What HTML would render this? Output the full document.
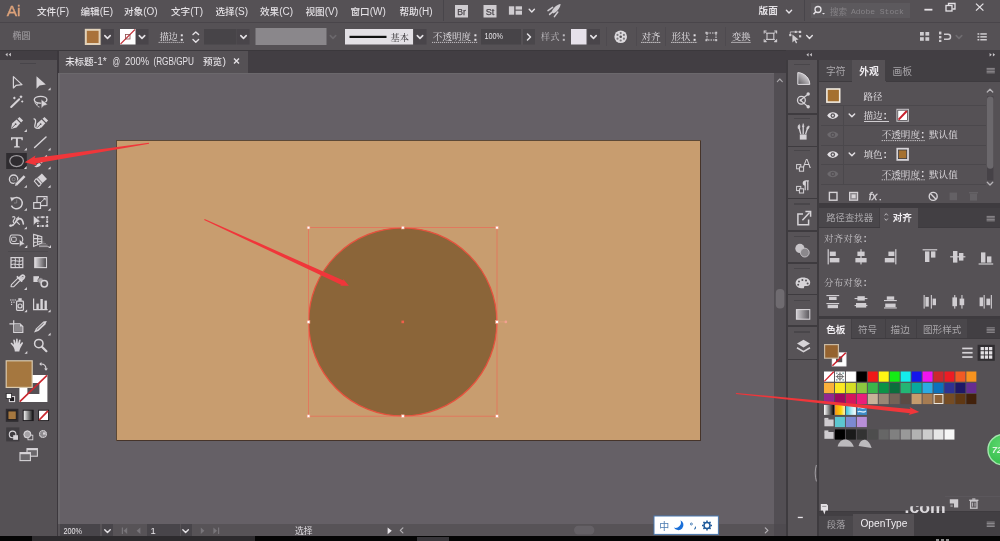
<!DOCTYPE html>
<html lang="zh"><head><meta charset="utf-8"><title>Adobe Illustrator</title>
<style>
html,body{margin:0;padding:0;background:#555155;}
body{width:1000px;height:541px;overflow:hidden;position:relative;font-family:"Liberation Sans",sans-serif;}
#app{position:absolute;left:0;top:0;width:1000px;height:541px;overflow:hidden;background:#555155;}
#app>div{position:absolute;}
#ov{position:absolute;left:0;top:0;will-change:transform;}
svg{font-family:"Liberation Sans",sans-serif;}
</style></head><body>
<div id="app">
<div style="left:0px;top:0px;width:1000px;height:22px;background:#555155;"></div>
<div style="left:0px;top:22px;width:1000px;height:1px;background:#49454a;"></div>
<div style="left:443px;top:0px;width:1px;height:21px;background:#48454a;"></div>
<div style="left:804px;top:0px;width:1px;height:21px;background:#48454a;"></div>
<div style="left:0px;top:23px;width:1000px;height:27px;background:#555155;"></div>
<div style="left:606px;top:27px;width:1px;height:19px;background:#4e4a4f;"></div>
<div style="left:635.5px;top:27px;width:1px;height:19px;background:#4e4a4f;"></div>
<div style="left:665px;top:27px;width:1px;height:19px;background:#4e4a4f;"></div>
<div style="left:725px;top:27px;width:1px;height:19px;background:#4e4a4f;"></div>
<div style="left:0px;top:50px;width:1000px;height:23px;background:#423e43;"></div>
<div style="left:0px;top:50px;width:1000px;height:1px;background:#3b383c;"></div>
<div style="left:0px;top:51px;width:57px;height:8.6px;background:#423e43;"></div>
<div style="left:58.6px;top:51px;width:189.9px;height:21.5px;background:#555155;"></div>
<div style="left:0px;top:59.5px;width:57px;height:477px;background:#555155;"></div>
<div style="left:56.8px;top:51px;width:1.8px;height:485px;background:#3c383d;"></div>
<div style="left:20px;top:63px;width:16px;height:1px;background:#48454a;"></div>
<div style="left:8px;top:250.5px;width:40px;height:1px;background:#4c494d;"></div>
<div style="left:58px;top:72.5px;width:716px;height:452px;background:#6b686c;"></div>
<div style="left:59.5px;top:74px;width:714px;height:450.5px;background:#656066;"></div>
<div style="left:116.3px;top:139.6px;width:584.8px;height:301.4px;background:#46342a;"></div>
<div style="left:116.3px;top:139.6px;width:584.8px;height:1.2px;background:#5c4937;"></div>
<div style="left:116.3px;top:139.6px;width:1.2px;height:301.4px;background:#5c4937;"></div>
<div style="left:117.4px;top:140.7px;width:582.6px;height:299.3px;background:#c89d6f;"></div>
<div style="left:774px;top:72.5px;width:13.5px;height:452px;background:#524e53;"></div>
<div style="left:785.5px;top:50px;width:214.5px;height:9.6px;background:#423e43;"></div>
<div style="left:785.5px;top:59.5px;width:33.5px;height:477px;background:#3e3b3f;"></div>
<div style="left:787.8px;top:59.5px;width:29.4px;height:477px;background:#575357;"></div>
<div style="left:794px;top:63.6px;width:16px;height:1.4px;background:#49464a;"></div>
<div style="left:787.8px;top:113.4px;width:29.4px;height:1.5px;background:#3e3b3f;"></div>
<div style="left:794px;top:117.6px;width:16px;height:1.4px;background:#49464a;"></div>
<div style="left:787.8px;top:145.6px;width:29.4px;height:1.5px;background:#3e3b3f;"></div>
<div style="left:794px;top:150px;width:16px;height:1.4px;background:#49464a;"></div>
<div style="left:787.8px;top:197.8px;width:29.4px;height:1.5px;background:#3e3b3f;"></div>
<div style="left:794px;top:203.4px;width:16px;height:1.4px;background:#49464a;"></div>
<div style="left:787.8px;top:230.4px;width:29.4px;height:1.5px;background:#3e3b3f;"></div>
<div style="left:794px;top:236px;width:16px;height:1.4px;background:#49464a;"></div>
<div style="left:787.8px;top:262.2px;width:29.4px;height:1.5px;background:#3e3b3f;"></div>
<div style="left:794px;top:267.6px;width:16px;height:1.4px;background:#49464a;"></div>
<div style="left:787.8px;top:293.8px;width:29.4px;height:1.5px;background:#3e3b3f;"></div>
<div style="left:794px;top:299.8px;width:16px;height:1.4px;background:#49464a;"></div>
<div style="left:787.8px;top:325.4px;width:29.4px;height:1.5px;background:#3e3b3f;"></div>
<div style="left:794px;top:331.2px;width:16px;height:1.4px;background:#49464a;"></div>
<div style="left:787.8px;top:358.6px;width:29.4px;height:1.5px;background:#3e3b3f;"></div>
<div style="left:818.8px;top:59.5px;width:181.20000000000005px;height:21.5px;background:#423f43;"></div>
<div style="left:818.8px;top:81px;width:181.20000000000005px;height:122px;background:#555155;"></div>
<div style="left:818.8px;top:59.5px;width:181.20000000000005px;height:21px;background:#423f43;"></div>
<div style="left:818.8px;top:59.5px;width:33.10000000000002px;height:21px;background:#4a474b;"></div>
<div style="left:851.9px;top:59.5px;width:33.60000000000002px;height:22.5px;background:#555155;"></div>
<div style="left:818.8px;top:80.5px;width:33.1px;height:1.5px;background:#3e3b3f;"></div>
<div style="left:885.5px;top:80.5px;width:114.5px;height:1.5px;background:#3e3b3f;"></div>
<div style="left:820.8px;top:105.3px;width:165px;height:1px;background:#4b484c;"></div>
<div style="left:820.8px;top:125px;width:165px;height:1px;background:#4b484c;"></div>
<div style="left:820.8px;top:144.6px;width:165px;height:1px;background:#4b484c;"></div>
<div style="left:820.8px;top:163.9px;width:165px;height:1px;background:#4b484c;"></div>
<div style="left:820.8px;top:184.2px;width:165px;height:1px;background:#4b484c;"></div>
<div style="left:843.3px;top:105.5px;width:1px;height:79px;background:#4b484c;"></div>
<div style="left:863.5px;top:120.6px;width:25px;height:1px;background:#d0cdd1;"></div>
<div style="left:818.8px;top:203px;width:181.20000000000005px;height:4.5px;background:#3e3b3f;"></div>
<div style="left:818.8px;top:207.5px;width:181.20000000000005px;height:20px;background:#423f43;"></div>
<div style="left:818.8px;top:227.5px;width:181.20000000000005px;height:89px;background:#555155;"></div>
<div style="left:818.8px;top:207.5px;width:181.20000000000005px;height:19.5px;background:#423f43;"></div>
<div style="left:818.8px;top:207.5px;width:60.40000000000009px;height:19.5px;background:#4a474b;"></div>
<div style="left:880.2px;top:207.5px;width:37.59999999999991px;height:21.0px;background:#555155;"></div>
<div style="left:818.8px;top:227px;width:61.4px;height:1.3px;background:#3e3b3f;"></div>
<div style="left:917.8px;top:227px;width:82.20000000000005px;height:1.3px;background:#3e3b3f;"></div>
<div style="left:818.8px;top:316.4px;width:181.20000000000005px;height:2.6px;background:#3e3b3f;"></div>
<div style="left:818.8px;top:319px;width:181.20000000000005px;height:19.5px;background:#423f43;"></div>
<div style="left:818.8px;top:338.5px;width:181.20000000000005px;height:176px;background:#555155;"></div>
<div style="left:818.8px;top:319px;width:181.20000000000005px;height:19.5px;background:#423f43;"></div>
<div style="left:818.8px;top:319px;width:32.60000000000002px;height:21.0px;background:#555155;"></div>
<div style="left:852.4px;top:319px;width:32.200000000000045px;height:19.5px;background:#4a474b;"></div>
<div style="left:885.6px;top:319px;width:30.799999999999955px;height:19.5px;background:#4a474b;"></div>
<div style="left:917.4px;top:319px;width:49.60000000000002px;height:19.5px;background:#4a474b;"></div>
<div style="left:851.4px;top:338.2px;width:148.60000000000002px;height:1.3px;background:#3e3b3f;"></div>
<div style="left:945px;top:495.6px;width:55px;height:1px;background:#5b575c;"></div>
<div style="left:818.8px;top:511px;width:181.20000000000005px;height:25px;background:#423f43;"></div>
<div style="left:818.8px;top:511px;width:181.20000000000005px;height:1.4px;background:#3e3b3f;"></div>
<div style="left:818.8px;top:515.6px;width:34px;height:20.2px;background:#4a474b;"></div>
<div style="left:852.8px;top:513.6px;width:60.8px;height:22.2px;background:#555155;"></div>
<div style="left:58px;top:524px;width:716px;height:12px;background:#575357;"></div>
<div style="left:60px;top:524.4px;width:40px;height:11.4px;background:#48454a;"></div>
<div style="left:102px;top:524.4px;width:11.2px;height:11.4px;background:#48454a;"></div>
<div style="left:147.4px;top:524.4px;width:32.6px;height:11.4px;background:#48454a;"></div>
<div style="left:180.8px;top:524.4px;width:11.2px;height:11.4px;background:#48454a;"></div>
<div style="left:396px;top:524px;width:378px;height:12px;background:#575357;"></div>
<div style="left:774px;top:524px;width:11.5px;height:12px;background:#4e4a4f;"></div>
<div style="left:0px;top:535.8px;width:1000px;height:5.2px;background:#050505;"></div>
<div style="left:31.7px;top:535.8px;width:223.3px;height:5.2px;background:#2d2b2e;"></div>
<div style="left:417px;top:536.6px;width:32px;height:4.4px;background:#38363a;"></div>
<div style="left:936px;top:538.6px;width:3px;height:2.4px;background:#8a8a8a;"></div>
<div style="left:941px;top:538.6px;width:3px;height:2.4px;background:#8a8a8a;"></div>
<div style="left:946px;top:538.6px;width:3px;height:2.4px;background:#8a8a8a;"></div>
<svg id="ov" width="1000" height="541" viewBox="0 0 1000 541">
<text x="6.8" y="15.6" font-size="15.5" fill="#dda27a" stroke="#dda27a" stroke-width="0.35" letter-spacing="-0.2">Ai</text>
<text x="37.00" y="15.00" font-family="'Liberation Sans','Noto Sans CJK SC',sans-serif" font-size="9.6" font-weight="500" fill="#e4e1e5">文件</text><text x="56.20" y="15.00" font-family="Liberation Sans" font-size="10" fill="#e4e1e5" xml:space="preserve">(F)</text>
<text x="80.50" y="15.00" font-family="'Liberation Sans','Noto Sans CJK SC',sans-serif" font-size="9.6" font-weight="500" fill="#e4e1e5">编辑</text><text x="99.70" y="15.00" font-family="Liberation Sans" font-size="10" fill="#e4e1e5" xml:space="preserve">(E)</text>
<text x="124.00" y="15.00" font-family="'Liberation Sans','Noto Sans CJK SC',sans-serif" font-size="9.6" font-weight="500" fill="#e4e1e5">对象</text><text x="143.20" y="15.00" font-family="Liberation Sans" font-size="10" fill="#e4e1e5" xml:space="preserve">(O)</text>
<text x="171.00" y="15.00" font-family="'Liberation Sans','Noto Sans CJK SC',sans-serif" font-size="9.6" font-weight="500" fill="#e4e1e5">文字</text><text x="190.20" y="15.00" font-family="Liberation Sans" font-size="10" fill="#e4e1e5" xml:space="preserve">(T)</text>
<text x="215.50" y="15.00" font-family="'Liberation Sans','Noto Sans CJK SC',sans-serif" font-size="9.6" font-weight="500" fill="#e4e1e5">选择</text><text x="234.70" y="15.00" font-family="Liberation Sans" font-size="10" fill="#e4e1e5" xml:space="preserve">(S)</text>
<text x="260.00" y="15.00" font-family="'Liberation Sans','Noto Sans CJK SC',sans-serif" font-size="9.6" font-weight="500" fill="#e4e1e5">效果</text><text x="279.20" y="15.00" font-family="Liberation Sans" font-size="10" fill="#e4e1e5" xml:space="preserve">(C)</text>
<text x="305.50" y="15.00" font-family="'Liberation Sans','Noto Sans CJK SC',sans-serif" font-size="9.6" font-weight="500" fill="#e4e1e5">视图</text><text x="324.70" y="15.00" font-family="Liberation Sans" font-size="10" fill="#e4e1e5" xml:space="preserve">(V)</text>
<text x="350.50" y="15.00" font-family="'Liberation Sans','Noto Sans CJK SC',sans-serif" font-size="9.6" font-weight="500" fill="#e4e1e5">窗口</text><text x="369.70" y="15.00" font-family="Liberation Sans" font-size="10" fill="#e4e1e5" xml:space="preserve">(W)</text>
<text x="399.50" y="15.00" font-family="'Liberation Sans','Noto Sans CJK SC',sans-serif" font-size="9.6" font-weight="500" fill="#e4e1e5">帮助</text><text x="418.70" y="15.00" font-family="Liberation Sans" font-size="10" fill="#e4e1e5" xml:space="preserve">(H)</text>
<rect x="455" y="5" width="13" height="12.5" fill="#cfccd0"/>
<text x="461.5" y="14.8" font-size="9" fill="#4a464b" stroke="#4a464b" stroke-width="0.25" text-anchor="middle" textLength="8.6" lengthAdjust="spacingAndGlyphs">Br</text>
<rect x="483.5" y="5" width="13" height="12.5" fill="#cfccd0"/>
<text x="490.0" y="14.8" font-size="9" fill="#4a464b" stroke="#4a464b" stroke-width="0.25" text-anchor="middle" textLength="8.6" lengthAdjust="spacingAndGlyphs">St</text>
<rect x="508.9" y="6.3" width="5.3" height="8.4" fill="#cfccd0"/>
<rect x="515.6" y="6.3" width="6.4" height="3.3" fill="#cfccd0"/>
<rect x="515.6" y="10.7" width="6.4" height="4" fill="#cfccd0"/>
<path d="M529.1999999999999 9.299999999999999 L531.8 11.9 L534.4 9.299999999999999" fill="none" stroke="#e4e1e5" stroke-width="1.4" stroke-linecap="round" stroke-linejoin="round"/>
<path d="M560.6 4 C556.6 4.6 553 8 551.4 12.2 L553.2 13.6 C557.2 11.8 560.2 8 560.6 4 Z" fill="#cfccd0" />
<path d="M548 10.6 L552.6 7.4 M554.4 16.6 L557.8 12 M549.6 14.4 L551.6 12.6" fill="none" stroke="#cfccd0" stroke-width="1.5" stroke-linecap="round"/>
<text x="758.60" y="14.40" font-family="'Liberation Sans','Noto Sans CJK SC',sans-serif" font-size="9.6" font-weight="bold" fill="#e4e1e5">版面</text>
<path d="M786.4 10.299999999999999 L789 12.9 L791.6 10.299999999999999" fill="none" stroke="#e4e1e5" stroke-width="1.4" stroke-linecap="round" stroke-linejoin="round"/>
<rect x="811" y="3" width="99" height="15" fill="#5c595d"/>
<circle cx="818" cy="9.5" r="3" fill="none" stroke="#e4e1e5" stroke-width="1.3"/><path d="M815.8 11.8 L813.5 14.2" stroke="#e4e1e5" stroke-width="1.5"/><path d="M822 13 l3 0 l-1.5 1.6z" fill="#e4e1e5"/>
<text x="830.00" y="14.50" font-family="'Liberation Sans','Noto Sans CJK SC',sans-serif" font-size="8.6" fill="#858286">搜索</text>
<text x="851" y="14.3" font-family="Liberation Mono" font-size="8" fill="#858286" xml:space="preserve">Adobe Stock</text>
<rect x="924.4" y="8.8" width="8" height="1.8" fill="#e4e1e5"/>
<rect x="946" y="5.5" width="6" height="5.5" fill="none" stroke="#e4e1e5" stroke-width="1.3"/><path d="M948.5 5.5 V3.5 H955 V9 H952.5" fill="none" stroke="#e4e1e5" stroke-width="1.3"/>
<path d="M976 3.6 L983.4 10.6 M983.4 3.6 L976 10.6" fill="none" stroke="#e4e1e5" stroke-width="1.3" />
<text x="12.50" y="39.30" font-family="'Liberation Sans','Noto Sans CJK SC',sans-serif" font-size="9" fill="#a6a3a7">椭圆</text>
<rect x="84.8" y="28.8" width="15.8" height="16.2" fill="#e2d2ba"/>
<rect x="86.8" y="30.8" width="11.8" height="12.2" fill="#a9723a"/>
<rect x="101.5" y="29" width="12.5" height="15.5" fill="#49454a"/>
<path d="M104.8 35.65 L107.5 38.35 L110.2 35.65" fill="none" stroke="#e4e1e5" stroke-width="1.6" stroke-linecap="round" stroke-linejoin="round"/>
<rect x="120" y="29" width="15.5" height="15.5" fill="#ffffff"/>
<path d="M120.5 44 L135 29.5" fill="none" stroke="#c4323a" stroke-width="1.1" />
<rect x="125.5" y="34.5" width="4.5" height="4.5" fill="none" stroke="#8c4a4a" stroke-width="0.8"/>
<rect x="136" y="29" width="12.5" height="15.5" fill="#49454a"/>
<path d="M139.3 35.65 L142 38.35 L144.7 35.65" fill="none" stroke="#e4e1e5" stroke-width="1.6" stroke-linecap="round" stroke-linejoin="round"/>
<text x="159.40" y="40.40" font-family="'Liberation Serif','Noto Serif CJK SC',serif" font-size="9.3" letter-spacing="-0.2" fill="#e4e1e5">描边</text>
<rect x="180.79999999999998" y="34.3" width="2" height="2" fill="#e4e1e5"/>
<rect x="180.79999999999998" y="38.8" width="2" height="2" fill="#e4e1e5"/>
<line x1="158.6" y1="42.4" x2="184.3" y2="42.4" stroke="#cfcccf" stroke-width="0.9" stroke-dasharray="1.2 0.8"/>
<path d="M193 34.6 L195.8 32 L198.6 34.6 M193 39.6 L195.8 42.2 L198.6 39.6" fill="none" stroke="#e4e1e5" stroke-width="1.4" stroke-linecap="round" stroke-linejoin="round"/>
<rect x="204" y="29" width="32.5" height="15.5" fill="#474448"/>
<rect x="237" y="29" width="12.5" height="15.5" fill="#49454a"/>
<path d="M240.8 35.65 L243.5 38.35 L246.2 35.65" fill="none" stroke="#e4e1e5" stroke-width="1.6" stroke-linecap="round" stroke-linejoin="round"/>
<rect x="255.5" y="28" width="71" height="17" fill="#8a878b"/>
<path d="M330.3 35.65 L333 38.35 L335.7 35.65" fill="none" stroke="#6b686c" stroke-width="1.6" stroke-linecap="round" stroke-linejoin="round"/>
<rect x="345" y="29" width="68" height="15.5" fill="#e3e0e5"/>
<rect x="349.5" y="35.8" width="37" height="2.2" fill="#111"/>
<text x="390.50" y="40.60" font-family="'Liberation Serif','Noto Serif CJK SC',serif" font-size="9.2" fill="#333034">基本</text>
<rect x="414" y="29" width="12.5" height="15.5" fill="#49454a"/>
<path d="M417.3 35.65 L420 38.35 L422.7 35.65" fill="none" stroke="#e4e1e5" stroke-width="1.6" stroke-linecap="round" stroke-linejoin="round"/>
<text x="432.80" y="40.40" font-family="'Liberation Serif','Noto Serif CJK SC',serif" font-size="9.5" letter-spacing="0.1" fill="#e4e1e5">不透明度</text>
<rect x="474.4000000000001" y="34.3" width="2" height="2" fill="#e4e1e5"/>
<rect x="474.4000000000001" y="38.8" width="2" height="2" fill="#e4e1e5"/>
<line x1="432.0" y1="42.4" x2="477.9" y2="42.4" stroke="#cfcccf" stroke-width="0.9" stroke-dasharray="1.2 0.8"/>
<rect x="481" y="29" width="40" height="15.5" fill="#474448"/>
<text x="484.4" y="39.2" font-size="9.2" fill="#e4e1e5" textLength="18.6" lengthAdjust="spacingAndGlyphs">100%</text>
<rect x="523" y="29" width="12" height="15.5" fill="#4a474b"/>
<path d="M527.5 34.0 L530.5 37 L527.5 40.0" fill="none" stroke="#e4e1e5" stroke-width="1.5" stroke-linecap="round" stroke-linejoin="round"/>
<text x="540.80" y="40.40" font-family="'Liberation Serif','Noto Serif CJK SC',serif" font-size="9.4" fill="#bdbabf">样式</text>
<rect x="562.8" y="34.3" width="2" height="2" fill="#bdbabf"/>
<rect x="562.8" y="38.8" width="2" height="2" fill="#bdbabf"/>
<rect x="571" y="29" width="15.5" height="15.5" fill="#e6e1ea"/>
<rect x="587.5" y="29" width="12.5" height="15.5" fill="#49454a"/>
<path d="M590.8 35.65 L593.5 38.35 L596.2 35.65" fill="none" stroke="#e4e1e5" stroke-width="1.6" stroke-linecap="round" stroke-linejoin="round"/>
<circle cx="620.7" cy="36.8" r="6.3" fill="#dcd9dd"/><circle cx="620.7" cy="36.8" r="1.3" fill="#535053"/>
<circle cx="623.90" cy="38.65" r="1.1" fill="#7a777b"/>
<circle cx="620.70" cy="40.50" r="1.1" fill="#7a777b"/>
<circle cx="617.50" cy="38.65" r="1.1" fill="#7a777b"/>
<circle cx="617.50" cy="34.95" r="1.1" fill="#7a777b"/>
<circle cx="620.70" cy="33.10" r="1.1" fill="#7a777b"/>
<circle cx="623.90" cy="34.95" r="1.1" fill="#7a777b"/>
<text x="641.80" y="40.40" font-family="'Liberation Serif','Noto Serif CJK SC',serif" font-size="9.3" fill="#e4e1e5">对齐</text>
<line x1="641.0" y1="42.4" x2="660.4" y2="42.4" stroke="#cfcccf" stroke-width="0.9" stroke-dasharray="1.6 0.4"/>
<text x="671.80" y="40.40" font-family="'Liberation Serif','Noto Serif CJK SC',serif" font-size="9.3" fill="#e4e1e5">形状</text>
<rect x="693.5999999999999" y="34.3" width="2" height="2" fill="#e4e1e5"/>
<rect x="693.5999999999999" y="38.8" width="2" height="2" fill="#e4e1e5"/>
<line x1="671.0" y1="42.4" x2="697.1" y2="42.4" stroke="#cfcccf" stroke-width="0.9" stroke-dasharray="1.6 0.4"/>
<rect x="707" y="33" width="9" height="7" fill="none" stroke="#dcd9dd" stroke-width="1" stroke-dasharray="1.5 1"/>
<rect x="705.4" y="31.8" width="2" height="2" fill="#c8c5c9"/>
<rect x="715.2" y="31.8" width="2" height="2" fill="#c8c5c9"/>
<rect x="705.4" y="39.2" width="2" height="2" fill="#c8c5c9"/>
<rect x="715.2" y="39.2" width="2" height="2" fill="#c8c5c9"/>
<text x="732.00" y="40.40" font-family="'Liberation Serif','Noto Serif CJK SC',serif" font-size="9.3" fill="#e4e1e5">变换</text>
<line x1="731.2" y1="42.4" x2="750.6" y2="42.4" stroke="#cfcccf" stroke-width="0.9" stroke-dasharray="1.6 0.4"/>
<rect x="767" y="33.2" width="6.8" height="6.2" fill="none" stroke="#cfccd0" stroke-width="1.1"/>
<path d="M764.2 33.4 V31 H766.6 M774.2 31 H776.6 V33.4 M776.6 39.2 V41.6 H774.2 M766.6 41.6 H764.2 V39.2" fill="none" stroke="#cfccd0" stroke-width="1.1" />
<path d="M764.6 31.4 L767 33.6 M776.2 31.4 L773.8 33.6 M776.2 41.2 L773.8 39 M764.6 41.2 L767 39" fill="none" stroke="#cfccd0" stroke-width="0.9" />
<path d="M792.4 34.4 L792.4 42.4 L794.5 40.4 L796 43.4 L797.2 42.8 L795.8 39.9 L798.6 39.6 Z" fill="#cfccd0" />
<rect x="789.2" y="34" width="2.2" height="2.2" fill="#cfccd0"/>
<rect x="794.6" y="30.8" width="2.2" height="2.2" fill="#cfccd0"/>
<rect x="799" y="30.8" width="2.2" height="2.2" fill="#cfccd0"/>
<rect x="799" y="35.2" width="2.2" height="2.2" fill="#cfccd0"/>
<path d="M790.3 34 V31.9 H794.6 M796.8 31.9 H799" fill="none" stroke="#cfccd0" stroke-width="0.8" />
<path d="M806.7 35.6 L809.5 38.4 L812.3 35.6" fill="none" stroke="#e4e1e5" stroke-width="1.4" stroke-linecap="round" stroke-linejoin="round"/>
<rect x="920" y="32" width="3.8" height="3.6" fill="#cfccd0"/>
<rect x="925.4" y="32" width="3.8" height="3.6" fill="#cfccd0"/>
<rect x="920" y="37.2" width="3.8" height="3.6" fill="#cfccd0"/>
<rect x="925.4" y="37.2" width="3.8" height="3.6" fill="#cfccd0"/>
<rect x="939" y="31.6" width="2.4" height="2.8" fill="#cfccd0"/>
<rect x="939" y="36" width="2.4" height="2.4" fill="#cfccd0"/>
<rect x="939" y="39.8" width="2.4" height="2.2" fill="#cfccd0"/>
<path d="M944 34.2 H948 A2.5 2.5 0 0 1 948 39.2 H944" fill="none" stroke="#cfccd0" stroke-width="1.5" />
<path d="M956.25 35.6 L959 38.4 L961.75 35.6" fill="none" stroke="#6f6c70" stroke-width="1.6" stroke-linecap="round" stroke-linejoin="round"/>
<rect x="977.5" y="33.2" width="1.8" height="1.5" fill="#cfccd0"/>
<rect x="977.5" y="36.1" width="1.8" height="1.5" fill="#cfccd0"/>
<rect x="977.5" y="39" width="1.8" height="1.5" fill="#cfccd0"/>
<rect x="980.3" y="33.2" width="6.5" height="1.5" fill="#cfccd0"/>
<rect x="980.3" y="36.1" width="6.5" height="1.5" fill="#cfccd0"/>
<rect x="980.3" y="39" width="6.5" height="1.5" fill="#cfccd0"/>
<path d="M7.6 52.8 L5.4 54.6 L7.6 56.4 Z M10.9 52.8 L8.7 54.6 L10.9 56.4 Z" fill="#c9c6ca" />
<text x="65.20" y="65.00" font-family="'Liberation Sans','Noto Sans CJK SC',sans-serif" font-size="9.5" font-weight="500" letter-spacing="-0.15" fill="#e4e1e5">未标题</text>
<text x="93.8" y="64.8" font-size="10.4" fill="#e4e1e5" textLength="13" lengthAdjust="spacingAndGlyphs">-1*</text>
<text x="112.6" y="64.8" font-size="10.4" fill="#e4e1e5" textLength="7.6" lengthAdjust="spacingAndGlyphs">@</text>
<text x="125" y="64.8" font-size="10.4" fill="#e4e1e5" textLength="24" lengthAdjust="spacingAndGlyphs">200%</text>
<text x="153.4" y="64.8" font-size="10.4" fill="#e4e1e5" textLength="40.6" lengthAdjust="spacingAndGlyphs">(RGB/GPU</text>
<text x="203.00" y="65.00" font-family="'Liberation Sans','Noto Sans CJK SC',sans-serif" font-size="9.6" font-weight="500" letter-spacing="-0.1" fill="#e4e1e5">预览</text>
<text x="222.4" y="64.8" font-size="10.4" fill="#e4e1e5">)</text>
<path d="M234 58.5 L239 63.5 M239 58.5 L234 63.5" fill="none" stroke="#e4e1e5" stroke-width="1.4" />
<path d="M13.4 76.6 L13.4 88 L16.2 85.3 L22 84.6 Z" fill="none" stroke="#d6d3d7" stroke-width="1.2" stroke-linejoin="round" stroke-linecap="round"/>
<path d="M36.5 76.2 L36.5 88.8 L39.6 85.6 L45.8 84.6 Z" fill="#d6d3d7" />
<path d="M50.599999999999994 87.5 L50.599999999999994 90.3 L47.8 90.3 Z" fill="#d6d3d7" />
<path d="M11.2 107 L19.2 99.3" fill="none" stroke="#d6d3d7" stroke-width="2" stroke-linecap="round"/>
<path d="M12.9 98 L14.4 96.5 L15.9 98 L14.4 99.5 Z" fill="#d6d3d7" />
<path d="M19.4 96.8 L21 95.2 L22.6 96.8 L21 98.39999999999999 Z" fill="#d6d3d7" />
<path d="M20.9 101.5 L22.2 100.2 L23.5 101.5 L22.2 102.8 Z" fill="#d6d3d7" />
<ellipse cx="40.6" cy="99.8" rx="6.3" ry="3.4" fill="none" stroke="#d6d3d7" stroke-width="1.4"/>
<path d="M35.2 101.5 C34.5 104 37 105.5 37.8 103.8 C38.2 102.8 36.5 102.8 36.8 104.5 C37 106 38.5 107 39.5 107" fill="none" stroke="#d6d3d7" stroke-width="1" />
<path d="M41.2 99.2 L41.2 108.4 L43.6 106 L47.8 104.4 Z" fill="#d6d3d7" stroke="#555155" stroke-width="0.6" />
<path d="M10.9 128.9 L12.2 123.2 L16.6 119.6 L20.3 123.3 L16.6 127.6 Z" fill="#d6d3d7" />
<path d="M11.3 128.5 L15.2 124.6" fill="none" stroke="#555155" stroke-width="0.9" />
<circle cx="15.6" cy="124.2" r="0.9" fill="#555155"/>
<path d="M17.5 118.7 L19.5 116.9 L23.1 120.5 L21.2 122.4 Z" fill="#d6d3d7" />
<path d="M26.900000000000002 129.1 L26.900000000000002 131.9 L24.1 131.9 Z" fill="#d6d3d7" />
<path d="M35.9 128.9 L37.2 123.2 L41.6 119.6 L45.3 123.3 L41.6 127.6 Z" fill="#d6d3d7" />
<path d="M36.3 128.5 L40.2 124.6" fill="none" stroke="#555155" stroke-width="0.9" />
<circle cx="40.6" cy="124.2" r="0.9" fill="#555155"/>
<path d="M42.5 118.7 L44.5 116.9 L48.1 120.5 L46.2 122.4 Z" fill="#d6d3d7" />
<path d="M34 118.8 C36.5 119 35.5 123 34.8 125.5 C34.2 128 36.5 128.8 39.5 128.2" fill="none" stroke="#d6d3d7" stroke-width="1.3" stroke-linejoin="round" stroke-linecap="round"/>
<path d="M11 137.3 H22.8 V140.3 H21.6 L21.2 138.7 H17.9 V146 L19.8 146.4 V147.6 H14 V146.4 L15.9 146 V138.7 H12.6 L12.2 140.3 H11 Z" fill="#d6d3d7" />
<path d="M26.900000000000002 147.8 L26.900000000000002 150.60000000000002 L24.1 150.60000000000002 Z" fill="#d6d3d7" />
<path d="M34.6 147.5 L46 137" fill="none" stroke="#d6d3d7" stroke-width="1.5" stroke-linecap="round"/>
<path d="M50.599999999999994 147.8 L50.599999999999994 150.60000000000002 L47.8 150.60000000000002 Z" fill="#d6d3d7" />
<rect x="6.2" y="153" width="20.6" height="16" fill="#2f2c30"/>
<ellipse cx="16.6" cy="161" rx="6.8" ry="5.5" fill="none" stroke="#a09da1" stroke-width="1.25"/>
<path d="M26.7 166.1 L26.7 168.9 L23.9 168.9 Z" fill="#d6d3d7" />
<path d="M46.3 155 L40 162.2 L41.6 163.6 L47.5 156.2 Z" fill="#d6d3d7" />
<path d="M39.3 163 L41 164.6 C40 167 36.5 167.6 34.2 166.8 C36.5 166 36.8 163.6 39.3 163 Z" fill="#d6d3d7" />
<path d="M50.599999999999994 166.5 L50.599999999999994 169.3 L47.8 169.3 Z" fill="#d6d3d7" />
<circle cx="13.6" cy="179.2" r="4.2" fill="none" stroke="#d6d3d7" stroke-width="1.3"/>
<circle cx="13.6" cy="179.2" r="1.6" fill="none" stroke="#8d8a8e" stroke-width="0.8"/>
<path d="M15.6 185.2 L24.6 176.2" fill="none" stroke="#555155" stroke-width="4.2" />
<path d="M16.2 184.6 L24.6 176.2" fill="none" stroke="#d6d3d7" stroke-width="2.6" />
<path d="M15 185.9 L15.6 183.6 L17.3 185.3 Z" fill="#d6d3d7" />
<path d="M26.900000000000002 185.0 L26.900000000000002 187.8 L24.1 187.8 Z" fill="#d6d3d7" />
<path d="M41.9 173.4 L47 179 L40.8 184.6 L35.8 179 Z" fill="#d6d3d7" />
<path d="M35.8 179 L34.3 181.2 L38.8 186.3 L40.8 184.6" fill="none" stroke="#d6d3d7" stroke-width="1.1" stroke-linejoin="round" stroke-linecap="round"/>
<path d="M37.4 177.7 L42.4 183.2" fill="none" stroke="#555155" stroke-width="0.8" />
<path d="M50.599999999999994 185.0 L50.599999999999994 187.8 L47.8 187.8 Z" fill="#d6d3d7" />
<path d="M12.6 199 A5.7 5.7 0 1 1 11.4 205.6" fill="none" stroke="#d6d3d7" stroke-width="1.5" />
<path d="M10.2 197.3 L14.8 197.8 L11.6 201.6 Z" fill="#d6d3d7" />
<path d="M16.7 199.5 V203 H14" fill="none" stroke="#8d8a8e" stroke-width="0.8"/>
<path d="M26.900000000000002 207.9 L26.900000000000002 210.70000000000002 L24.1 210.70000000000002 Z" fill="#d6d3d7" />
<rect x="37" y="196.6" width="10" height="9" fill="none" stroke="#d6d3d7" stroke-width="1.2"/>
<rect x="33.7" y="202.6" width="6.8" height="5.8" fill="#555155" stroke="#d6d3d7" stroke-width="1.2"/>
<path d="M40.8 202.4 L45 198.4" fill="none" stroke="#d6d3d7" stroke-width="1" />
<path d="M45.6 197.8 L45.6 200.6 L42.8 197.8 Z" fill="#d6d3d7" />
<path d="M50.599999999999994 207.9 L50.599999999999994 210.70000000000002 L47.8 210.70000000000002 Z" fill="#d6d3d7" />
<path d="M10.2 225.6 C12 226 14 224.5 15.2 222.6 C16.5 220.3 17.8 218.4 20 218.6 C22.6 218.9 23 221.5 23.4 224" fill="none" stroke="#d6d3d7" stroke-width="1.6" stroke-linejoin="round" stroke-linecap="round"/>
<path d="M12.6 217 C14.5 216 15.8 217.5 14.4 219.2 C13.3 220.5 12.6 221.6 13.6 222.5 M17 222 L19.4 224.3 M16.3 219.2 L18.6 217.2" fill="none" stroke="#d6d3d7" stroke-width="1.1" stroke-linejoin="round" stroke-linecap="round"/>
<circle cx="10.6" cy="225.6" r="1.2" fill="#d6d3d7"/>
<path d="M26.900000000000002 226.5 L26.900000000000002 229.3 L24.1 229.3 Z" fill="#d6d3d7" />
<rect x="37.8" y="217.2" width="9.4" height="8.8" fill="none" stroke="#d6d3d7" stroke-width="1.2" stroke-dasharray="1.6 1.1"/>
<rect x="46.2" y="216.2" width="2" height="2" fill="#d6d3d7"/>
<rect x="46.2" y="225" width="2" height="2" fill="#d6d3d7"/>
<rect x="37" y="225" width="2" height="2" fill="#d6d3d7"/>
<rect x="41.6" y="225" width="2" height="2" fill="#d6d3d7"/>
<rect x="46.2" y="220.6" width="2" height="2" fill="#d6d3d7"/>
<rect x="41.6" y="216.2" width="2" height="2" fill="#d6d3d7"/>
<path d="M33.4 215.4 L33.4 225.4 L36 222.8 L40.6 221.6 Z" fill="#d6d3d7" stroke="#555155" stroke-width="0.6" />
<path d="M12 235 H17.5 C21 235 22.8 237 22.8 239.4 C22.8 242 21 243.6 17.5 243.6 H13 C10.8 243.6 9.8 242 9.8 239.4 C9.8 237 10.5 235 12 235 Z" fill="none" stroke="#d6d3d7" stroke-width="1.1" />
<rect x="11.6" y="237.2" width="4.6" height="4.2" rx="1" fill="none" stroke="#d6d3d7" stroke-width="1"/>
<path d="M19.4 239.4 L19.4 247 L21.4 245.2 L25 243.9 Z" fill="#d6d3d7" stroke="#555155" stroke-width="0.6" />
<path d="M27.3 245.1 L27.3 247.9 L24.5 247.9 Z" fill="#d6d3d7" />
<path d="M33.6 234.4 L41.8 236.6 L41.8 243 L33.6 246.4 Z M37.6 235.5 V244.8 M33.6 238.4 L41.8 239 M33.6 242.4 L41.8 241.2" fill="none" stroke="#d6d3d7" stroke-width="1.1" />
<path d="M39 242 H44.5" fill="none" stroke="#d6d3d7" stroke-width="0.8" opacity="0.35"/>
<path d="M39 243.6 H46" fill="none" stroke="#d6d3d7" stroke-width="0.8" opacity="0.5"/>
<path d="M39 245.2 H47.6" fill="none" stroke="#d6d3d7" stroke-width="0.8" opacity="0.65"/>
<path d="M39 246.6 H49" fill="none" stroke="#d6d3d7" stroke-width="0.8" opacity="0.8"/>
<path d="M51.0 245.1 L51.0 247.9 L48.2 247.9 Z" fill="#d6d3d7" />
<rect x="11" y="257.6" width="11.8" height="10" fill="none" stroke="#d6d3d7" stroke-width="1.2"/>
<path d="M15 257.6 C16.5 261 14 264 15.5 267.6 M19 257.6 C20.5 261 18 264 19.4 267.6 M11 261 C14.5 259.5 19 262.5 22.8 260.6 M11 264.6 C14.5 263 19 266 22.8 264" fill="none" stroke="#d6d3d7" stroke-width="1" />
<defs><linearGradient id="tg" x1="0" x2="1"><stop offset="0" stop-color="#e2dfe3"/><stop offset="1" stop-color="#4a474b"/></linearGradient></defs>
<rect x="34.7" y="257.6" width="11.8" height="10" fill="url(#tg)" stroke="#d6d3d7" stroke-width="1.1"/>
<path d="M11 286.6 L11.4 284.6 L18.2 277.8 L20.4 280 L13.6 286.8 Z" fill="none" stroke="#d6d3d7" stroke-width="1.1" stroke-linejoin="round" stroke-linecap="round"/>
<path d="M17.4 276.8 L21.6 281 M19.2 278 L21.6 275.6 A1.7 1.7 0 0 1 24 278 L21.6 280.4" fill="none" stroke="#d6d3d7" stroke-width="1.8" stroke-linejoin="round" stroke-linecap="round"/>
<path d="M19.8 278.8 L22.2 276.4 L23.2 277.4 L20.8 279.8Z" fill="#d6d3d7" />
<path d="M26.900000000000002 287.1 L26.900000000000002 289.90000000000003 L24.1 289.90000000000003 Z" fill="#d6d3d7" />
<rect x="33.4" y="276.2" width="5.6" height="5.8" fill="#d6d3d7"/>
<circle cx="40.6" cy="280.6" r="2.8" fill="#a5a2a6" stroke="#555155" stroke-width="0.6"/>
<circle cx="44.3" cy="283.8" r="3.2" fill="#555155" stroke="#d6d3d7" stroke-width="1.5"/>
<rect x="16.6" y="301.2" width="6.8" height="9.2" rx="0.8" fill="none" stroke="#d6d3d7" stroke-width="1.3"/>
<rect x="18.3" y="298.2" width="3.4" height="2.6" fill="#d6d3d7"/>
<circle cx="20" cy="306" r="2" fill="none" stroke="#d6d3d7" stroke-width="1.2"/>
<rect x="10.2" y="299.4" width="1.2" height="1.2" fill="#d6d3d7"/>
<rect x="12.4" y="299.4" width="1.2" height="1.2" fill="#d6d3d7"/>
<rect x="14.6" y="299.4" width="1.2" height="1.2" fill="#d6d3d7"/>
<rect x="11" y="301.6" width="1.2" height="1.2" fill="#d6d3d7"/>
<rect x="11" y="303.8" width="1.2" height="1.2" fill="#d6d3d7"/>
<rect x="13.4" y="301.6" width="1.2" height="1.2" fill="#d6d3d7"/>
<path d="M27.1 309.5 L27.1 312.3 L24.3 312.3 Z" fill="#d6d3d7" />
<path d="M33.6 298.6 V309.6 H47.6" fill="none" stroke="#d6d3d7" stroke-width="1.2" />
<rect x="36.4" y="303.6" width="2.4" height="5.4" fill="#d6d3d7"/>
<rect x="40.4" y="299" width="2.4" height="10" fill="#d6d3d7"/>
<rect x="44.5" y="300.6" width="2.4" height="8.4" fill="#d6d3d7"/>
<path d="M50.599999999999994 309.5 L50.599999999999994 312.3 L47.8 312.3 Z" fill="#d6d3d7" />
<path d="M13.7 320.3 V332.3 H22.8 V326.6 L20 323.8 H9.4" fill="none" stroke="#d6d3d7" stroke-width="1.2" />
<path d="M14.4 324.5 H19.6 L22.1 327 V331.6 H14.4 Z" fill="#8c898d" />
<path d="M20 323.8 V326.6 H22.8 Z" fill="#d6d3d7" />
<path d="M34 332.6 L36 328.4 L43.4 321.4 L46.8 321 L45.4 324.4 L38.4 331 Z" fill="#d6d3d7" />
<path d="M36.8 329.6 L43.6 323.2" fill="none" stroke="#555155" stroke-width="0.9" />
<path d="M50.599999999999994 332.7 L50.599999999999994 335.5 L47.8 335.5 Z" fill="#d6d3d7" />
<path d="M13.2 346.6 L10.8 343.8 C10.2 343 11.3 342.2 12.1 342.9 L14 344.8 L13.3 340.5 C13.1 339.4 14.6 339.1 14.9 340.2 L15.9 343.6 L16.1 339.4 C16.1 338.3 17.7 338.3 17.7 339.4 L17.9 343.6 L19.1 340 C19.4 339 20.9 339.4 20.6 340.5 L19.8 344.6 L21.6 342.6 C22.3 341.8 23.5 342.6 22.9 343.5 L20.4 348 C19.8 349.6 19.4 350.6 19.4 351.6 H14.8 C14.8 350 14.2 348 13.2 346.6 Z" fill="#d6d3d7" />
<path d="M27.3 351.0 L27.3 353.8 L24.5 353.8 Z" fill="#d6d3d7" />
<circle cx="38.8" cy="343.6" r="4.2" fill="none" stroke="#d6d3d7" stroke-width="1.5"/>
<path d="M41.9 346.7 L46.4 351.2" fill="none" stroke="#d6d3d7" stroke-width="2.2" stroke-linecap="round"/>
<rect x="19.4" y="375" width="28" height="27" fill="#ffffff"/>
<rect x="27.4" y="383" width="12" height="11" fill="#555155"/>
<path d="M19.8 401.6 L47 375.4" fill="none" stroke="#c9282f" stroke-width="1.6" />
<rect x="5.6" y="360.2" width="27.2" height="27.8" fill="#d9c9ae"/>
<rect x="6.8" y="361.4" width="24.8" height="25.4" fill="#a5773f"/>
<path d="M41 364 C44.5 364 46 365.5 46 369" fill="none" stroke="#d6d3d7" stroke-width="1.2" />
<path d="M41.4 362 L41.4 366 L39.2 364 Z M44 368.4 L48 368.4 L46 370.8 Z" fill="#d6d3d7" />
<rect x="9.4" y="396.6" width="5.2" height="5" fill="#1e1b1f" stroke="#e4e1e5" stroke-width="1.0"/>
<rect x="6.2" y="393.4" width="5.4" height="5.2" fill="#ffffff" stroke="#2a272b" stroke-width="0.8"/>
<rect x="5.8" y="408.8" width="12.6" height="13" fill="#2f2c30"/>
<rect x="8" y="411" width="8.2" height="8.6" fill="#a5773f" stroke="#1c191d" stroke-width="0.8"/>
<defs><linearGradient id="tg2" x1="0" x2="1"><stop offset="0" stop-color="#ffffff"/><stop offset="1" stop-color="#111"/></linearGradient></defs>
<rect x="23.2" y="410.2" width="10" height="10.4" fill="url(#tg2)" stroke="#1c191d" stroke-width="0.9"/>
<rect x="38.6" y="410.2" width="10" height="10.4" fill="#ffffff" stroke="#1c191d" stroke-width="0.9"/>
<path d="M39.2 420 L48 410.8" fill="none" stroke="#c9282f" stroke-width="1.8" />
<rect x="6.2" y="427.4" width="13.2" height="14" fill="#3f3c40"/>
<circle cx="12.6" cy="434.4" r="3.3" fill="none" stroke="#d6d3d7" stroke-width="1.1"/>
<rect x="13.2" y="435.2" width="4.8" height="4.6" fill="#d6d3d7"/>
<circle cx="27.4" cy="434.4" r="3.3" fill="none" stroke="#d6d3d7" stroke-width="1.1"/>
<rect x="28.0" y="435.2" width="4.8" height="4.6" fill="#555155" stroke="#d6d3d7" stroke-width="0.9"/>
<circle cx="27.4" cy="434.4" r="3.3" fill="#a5a2a6" stroke="#d6d3d7" stroke-width="1"/>
<circle cx="43" cy="434" r="3.3" fill="none" stroke="#d6d3d7" stroke-width="1.1"/>
<circle cx="43" cy="434" r="3.3" fill="#8d8a8e" stroke="#d6d3d7" stroke-width="1" stroke-dasharray="1.2 0.8"/>
<rect x="43" y="432.4" width="2.6" height="2.2" fill="#d6d3d7"/>
<rect x="27" y="448.6" width="10.4" height="7.6" fill="#6b686c" stroke="#d6d3d7" stroke-width="1.1"/>
<rect x="27" y="448.6" width="10.4" height="1.6" fill="#d6d3d7"/>
<rect x="20" y="452.6" width="10.4" height="8" fill="#6b686c" stroke="#d6d3d7" stroke-width="1.1"/>
<rect x="20" y="452.6" width="10.4" height="1.6" fill="#d6d3d7"/>
<circle cx="402.75" cy="321.9" r="94.1" fill="#8b6539" stroke="#e6523e" stroke-width="1.3"/>
<rect x="308.5" y="227.6" width="188.5" height="188.6" fill="none" stroke="#e6705a" stroke-width="0.8"/>
<rect x="307.1" y="226.2" width="2.8" height="2.8" fill="#ffffff" stroke="#ea9478" stroke-width="0.6"/>
<rect x="401.4" y="226.2" width="2.8" height="2.8" fill="#ffffff" stroke="#ea9478" stroke-width="0.6"/>
<rect x="495.6" y="226.2" width="2.8" height="2.8" fill="#ffffff" stroke="#ea9478" stroke-width="0.6"/>
<rect x="307.1" y="320.5" width="2.8" height="2.8" fill="#ffffff" stroke="#ea9478" stroke-width="0.6"/>
<rect x="495.6" y="320.5" width="2.8" height="2.8" fill="#ffffff" stroke="#ea9478" stroke-width="0.6"/>
<rect x="307.1" y="414.8" width="2.8" height="2.8" fill="#ffffff" stroke="#ea9478" stroke-width="0.6"/>
<rect x="401.4" y="414.8" width="2.8" height="2.8" fill="#ffffff" stroke="#ea9478" stroke-width="0.6"/>
<rect x="495.6" y="414.8" width="2.8" height="2.8" fill="#ffffff" stroke="#ea9478" stroke-width="0.6"/>
<rect x="401.45" y="320.59999999999997" width="2.6" height="2.6" fill="#f0604a"/>
<circle cx="505.8" cy="321.9" r="1.4" fill="#f2a090"/><path d="M499 321.9 H504.5" stroke="#e8a080" stroke-width="0.7"/>
<polygon points="148.9,142.8 34.7,158.0 35.5,155.6 24.7,162.3 37.0,165.5 35.5,163.4 149.1,143.8" fill="#f0363a"/>
<polygon points="204.2,219.9 341.5,285.0 339.9,285.7 348.9,285.7 343.0,278.8 343.5,280.6 204.6,218.9" fill="#f0363a"/>
<path d="M777.3 81.6 L779.8 79.0 L782.3 81.6" fill="none" stroke="#aba8ac" stroke-width="1.1" stroke-linecap="round" stroke-linejoin="round"/>
<rect x="775.8" y="289" width="8.6" height="19.6" fill="#6f6b70" rx="4"/>
<path d="M808.6 53 L806.4 54.8 L808.6 56.6 Z M811.9 53 L809.7 54.8 L811.9 56.6 Z" fill="#c9c6ca" />
<path d="M989.6 53 L991.8 54.8 L989.6 56.6 Z M992.9 53 L995.1 54.8 L992.9 56.6 Z" fill="#c9c6ca" />
<defs><linearGradient id="qg" x1="0" y1="1" x2="0.8" y2="0.2"><stop offset="0" stop-color="#5a575b"/><stop offset="1" stop-color="#dedbdf"/></linearGradient></defs>
<path d="M797.8 72.6 C804.5 73 809.6 78 809.8 84.4 H797.8 Z" fill="url(#qg)" stroke="#e2dfe3" stroke-width="1" />
<circle cx="801.4" cy="100.3" r="3.9" fill="none" stroke="#d6d3d7" stroke-width="1.3"/>
<path d="M800.4 100.3 L808 94.2 M800.4 100.3 L808 106.6" fill="none" stroke="#d6d3d7" stroke-width="1.2" />
<circle cx="808.2" cy="94" r="1.7" fill="#d6d3d7"/><circle cx="808.2" cy="106.8" r="1.7" fill="#d6d3d7"/><circle cx="800.6" cy="100.3" r="1.1" fill="#d6d3d7"/>
<rect x="799.8" y="134.4" width="6.8" height="5.2" fill="#d6d3d7"/>
<path d="M800.8 134 L799 127.5 M803.2 134 L803.2 126 M805.6 134 L807.6 128" fill="none" stroke="#d6d3d7" stroke-width="1.3" />
<path d="M798.2 128.5 C797.6 126.5 798.4 125 799.4 124.4 C800.2 126 800 127.5 799.6 128.5 Z M802.4 126.8 L803.2 123.6 L804 126.8 Z M806.8 128.6 C806.8 127 807.8 126 809.2 126 C809.2 127.6 808.6 128.8 807.8 129.4 Z" fill="#d6d3d7" stroke="#d6d3d7" stroke-width="0.6" />
<text x="802.6" y="168" font-size="12.5" fill="#d6d3d7">A</text>
<rect x="796.6" y="164.6" width="4.2" height="4.2" fill="#575357" stroke="#d6d3d7" stroke-width="1"/>
<rect x="799.4" y="167.0" width="4.2" height="4.2" fill="#575357" stroke="#d6d3d7" stroke-width="1"/>
<path d="M805.4 180.8 H808.8 M805.2 180.8 V190.2 M807.8 180.8 V190.2" fill="none" stroke="#d6d3d7" stroke-width="1.2" />
<path d="M805.4 180.4 A2.7 2.7 0 0 0 805.4 185.8 Z" fill="#d6d3d7" />
<rect x="796.6" y="186.4" width="4.2" height="4.2" fill="#575357" stroke="#d6d3d7" stroke-width="1"/>
<rect x="799.4" y="188.8" width="4.2" height="4.2" fill="#575357" stroke="#d6d3d7" stroke-width="1"/>
<path d="M803 214 H797.9 V224.8 H808.6 V219.6" fill="none" stroke="#d6d3d7" stroke-width="1.5" />
<path d="M802.4 220.2 L809.6 212.6" fill="none" stroke="#d6d3d7" stroke-width="1.5" />
<path d="M805.4 211.6 H810.6 V216.8" fill="none" stroke="#d6d3d7" stroke-width="1.5" />
<circle cx="799.9" cy="248.4" r="4.6" fill="#c7c4c8"/>
<circle cx="804.8" cy="252.6" r="4.4" fill="#8b888c" stroke="#c7c4c8" stroke-width="0.9"/>
<path d="M803 277.6 C807.4 277.6 810.2 279.8 810.2 282.8 C810.2 285.4 808 286.4 806.2 286 C804.6 285.6 803.8 286.4 804 287.4 C804.2 288.4 803 288.4 801 288.2 C797.6 287.8 795.6 285.8 795.6 283.2 C795.6 280 798.6 277.6 803 277.6 Z" fill="#d6d3d7" />
<circle cx="799" cy="281.6" r="1" fill="#555256"/>
<circle cx="802.4" cy="280" r="1" fill="#555256"/>
<circle cx="806" cy="280.4" r="1" fill="#555256"/>
<circle cx="798.2" cy="284.8" r="1" fill="#555256"/>
<circle cx="807.6" cy="283.4" r="1" fill="#555256"/>
<defs><linearGradient id="rg" x1="0" x2="1"><stop offset="0" stop-color="#d0cdd1"/><stop offset="1" stop-color="#58555a"/></linearGradient></defs>
<rect x="796.4" y="309.6" width="13.4" height="9.6" fill="url(#rg)" stroke="#dedbdf" stroke-width="1"/>
<path d="M803.5 339.8 L810 343.6 L803.5 347.4 L797 343.6 Z" fill="#d6d3d7" />
<path d="M797 347.8 L803.5 351.6 L810 347.8" fill="none" stroke="#d6d3d7" stroke-width="1.6" stroke-linejoin="miter"/>
<text x="826.00" y="74.50" font-family="'Liberation Sans','Noto Sans CJK SC',sans-serif" font-size="9.8" fill="#a8a5a9">字符</text>
<text x="859.20" y="74.50" font-family="'Liberation Sans','Noto Sans CJK SC',sans-serif" font-size="9.8" font-weight="bold" fill="#f0edf1">外观</text>
<text x="892.40" y="74.50" font-family="'Liberation Sans','Noto Sans CJK SC',sans-serif" font-size="9.8" fill="#a8a5a9">画板</text>
<rect x="986.6" y="67.9" width="8.2" height="0.9" fill="#949195"/>
<rect x="986.6" y="69.4" width="8.2" height="0.9" fill="#949195"/>
<rect x="986.6" y="70.9" width="8.2" height="0.9" fill="#949195"/>
<rect x="986.6" y="72.4" width="8.2" height="0.9" fill="#949195"/>
<rect x="826.1" y="88.2" width="14.4" height="14.7" fill="#f3ebe0"/>
<rect x="827.7" y="89.8" width="11.2" height="11.5" fill="#a5702f"/>
<text x="863.50" y="100.40" font-family="'Liberation Serif','Noto Serif CJK SC',serif" font-size="9.4" fill="#f0edf1">路径</text>
<path d="M827.1999999999999 115.6 C829.8 111.19999999999999 835.8 111.19999999999999 838.4 115.6 C835.8 120.0 829.8 120.0 827.1999999999999 115.6 Z" fill="#e4e1e5" />
<circle cx="832.8" cy="115.6" r="2.3" fill="#555155"/><circle cx="832.8" cy="115.6" r="1.1" fill="#e4e1e5"/>
<path d="M849.15 114.0 L851.9 116.80000000000001 L854.65 114.0" fill="none" stroke="#e4e1e5" stroke-width="1.4" stroke-linecap="round" stroke-linejoin="round"/>
<text x="863.50" y="119.00" font-family="'Liberation Serif','Noto Serif CJK SC',serif" font-size="9.6" fill="#e4e1e5">描边</text>
<text x="883.6" y="118.6" font-size="10" fill="#e4e1e5" font-weight="bold">:</text>
<rect x="896.4" y="108.8" width="12.5" height="13" fill="#c9c6ca"/>
<rect x="897.8" y="110.2" width="9.7" height="10.2" fill="#ffffff" stroke="#3a373b" stroke-width="0.7"/>
<path d="M898.6 119.6 L906.8 111" fill="none" stroke="#c8202c" stroke-width="2" />
<path d="M827.1999999999999 134.8 C829.8 130.4 835.8 130.4 838.4 134.8 C835.8 139.20000000000002 829.8 139.20000000000002 827.1999999999999 134.8 Z" fill="#6d6a6e" />
<circle cx="832.8" cy="134.8" r="2.3" fill="#555155"/><circle cx="832.8" cy="134.8" r="1.1" fill="#6d6a6e"/>
<text x="881.70" y="138.40" font-family="'Liberation Serif','Noto Serif CJK SC',serif" font-size="9.6" fill="#e4e1e5">不透明度</text>
<text x="921" y="138" font-size="10" fill="#e4e1e5" font-weight="bold">:</text>
<line x1="881.7" y1="140.6" x2="925" y2="140.6" stroke="#d0cdd1" stroke-width="1" stroke-dasharray="1.2 1"/>
<text x="929.00" y="138.40" font-family="'Liberation Serif','Noto Serif CJK SC',serif" font-size="9.6" fill="#e4e1e5">默认值</text>
<path d="M827.1999999999999 154.6 C829.8 150.2 835.8 150.2 838.4 154.6 C835.8 159.0 829.8 159.0 827.1999999999999 154.6 Z" fill="#e4e1e5" />
<circle cx="832.8" cy="154.6" r="2.3" fill="#555155"/><circle cx="832.8" cy="154.6" r="1.1" fill="#e4e1e5"/>
<path d="M849.15 153.0 L851.9 155.8 L854.65 153.0" fill="none" stroke="#e4e1e5" stroke-width="1.4" stroke-linecap="round" stroke-linejoin="round"/>
<text x="863.50" y="158.00" font-family="'Liberation Serif','Noto Serif CJK SC',serif" font-size="9.6" fill="#e4e1e5">填色</text>
<text x="883.6" y="157.6" font-size="10" fill="#e4e1e5" font-weight="bold">:</text>
<rect x="896.4" y="147.8" width="12.5" height="13" fill="#d6d3d7"/>
<rect x="898.6" y="150" width="8.1" height="8.6" fill="#a5702f" stroke="#3a373b" stroke-width="0.8"/>
<path d="M827.1999999999999 174 C829.8 169.6 835.8 169.6 838.4 174 C835.8 178.4 829.8 178.4 827.1999999999999 174 Z" fill="#6d6a6e" />
<circle cx="832.8" cy="174" r="2.3" fill="#555155"/><circle cx="832.8" cy="174" r="1.1" fill="#6d6a6e"/>
<text x="881.70" y="177.60" font-family="'Liberation Serif','Noto Serif CJK SC',serif" font-size="9.6" fill="#e4e1e5">不透明度</text>
<text x="921" y="177.2" font-size="10" fill="#e4e1e5" font-weight="bold">:</text>
<line x1="881.7" y1="179.8" x2="925" y2="179.8" stroke="#d0cdd1" stroke-width="1" stroke-dasharray="1.2 1"/>
<text x="929.00" y="177.60" font-family="'Liberation Serif','Noto Serif CJK SC',serif" font-size="9.6" fill="#e4e1e5">默认值</text>
<path d="M987.25 92.0 L990 89.19999999999999 L992.75 92.0" fill="none" stroke="#b5b2b6" stroke-width="1.3" stroke-linecap="round" stroke-linejoin="round"/>
<rect x="987" y="96.4" width="6.4" height="84" fill="#464247"/>
<rect x="987" y="96.4" width="6.4" height="72.4" fill="#6b686c" rx="3.2"/>
<path d="M987.25 182.2 L990 185.0 L992.75 182.2" fill="none" stroke="#b5b2b6" stroke-width="1.3" stroke-linecap="round" stroke-linejoin="round"/>
<rect x="829.4" y="192.4" width="7.6" height="7.8" fill="none" stroke="#d6d3d7" stroke-width="1.4"/>
<rect x="849.6" y="192.4" width="8" height="7.8" fill="#8b888c" stroke="#d6d3d7" stroke-width="1.2"/><rect x="851.6" y="194.4" width="4" height="3.8" fill="#d6d3d7"/>
<text x="868.8" y="200.2" font-size="11" font-style="italic" fill="#d6d3d7" stroke="#d6d3d7" stroke-width="0.3">fx</text>
<rect x="879.6" y="199" width="1.3" height="1.3" fill="#d6d3d7"/>
<circle cx="933.2" cy="196.4" r="4" fill="none" stroke="#d6d3d7" stroke-width="1.4"/>
<path d="M930.4 193.6 L936 199.2" fill="none" stroke="#d6d3d7" stroke-width="1.4" />
<rect x="949.6" y="192.6" width="7.4" height="7.6" fill="#646165"/>
<rect x="970" y="193.6" width="7" height="7" fill="#646165"/>
<rect x="969" y="192" width="9" height="1.4" fill="#646165"/>
<text x="826.20" y="221.00" font-family="'Liberation Sans','Noto Sans CJK SC',sans-serif" font-size="9.4" fill="#a8a5a9">路径查找器</text>
<text x="892.70" y="221.00" font-family="'Liberation Sans','Noto Sans CJK SC',sans-serif" font-size="9.6" font-weight="bold" fill="#f0edf1">对齐</text>
<rect x="986.6" y="215.9" width="8.2" height="0.9" fill="#949195"/>
<rect x="986.6" y="217.4" width="8.2" height="0.9" fill="#949195"/>
<rect x="986.6" y="218.9" width="8.2" height="0.9" fill="#949195"/>
<rect x="986.6" y="220.4" width="8.2" height="0.9" fill="#949195"/>
<path d="M884.6 215.4 L886.2 213.6 L887.8 215.4 M884.6 218.6 L886.2 220.4 L887.8 218.6" fill="none" stroke="#c8c5c9" stroke-width="0.9" />
<text x="824.00" y="242.40" font-family="'Liberation Serif','Noto Serif CJK SC',serif" font-size="9.4" letter-spacing="0.4" fill="#c4c1c5">对齐对象</text>
<text x="863.6" y="242" font-size="10" fill="#c4c1c5" font-weight="bold">:</text>
<text x="824.00" y="286.40" font-family="'Liberation Serif','Noto Serif CJK SC',serif" font-size="9.4" letter-spacing="0.4" fill="#c4c1c5">分布对象</text>
<text x="863.6" y="286" font-size="10" fill="#c4c1c5" font-weight="bold">:</text>
<rect x="827.6" y="249.2" width="1.2" height="15.2" fill="#d0cdd1"/>
<rect x="829.8" y="251.6" width="6" height="4.4" fill="#d0cdd1"/>
<rect x="829.8" y="258" width="9.6" height="4.4" fill="#d0cdd1"/>
<rect x="860.4" y="249.2" width="1.2" height="15.2" fill="#d0cdd1"/>
<rect x="857.4" y="251.6" width="7.2" height="4.4" fill="#d0cdd1"/>
<rect x="855.4" y="258" width="11.2" height="4.4" fill="#d0cdd1"/>
<rect x="895.2" y="249.2" width="1.2" height="15.2" fill="#d0cdd1"/>
<rect x="888.4" y="251.6" width="6" height="4.4" fill="#d0cdd1"/>
<rect x="884.8" y="258" width="9.6" height="4.4" fill="#d0cdd1"/>
<rect x="922.6" y="249.2" width="14.6" height="1.2" fill="#d0cdd1"/>
<rect x="925" y="251.4" width="4.4" height="10.6" fill="#d0cdd1"/>
<rect x="931" y="251.4" width="4.4" height="6.2" fill="#d0cdd1"/>
<rect x="950.2" y="256.2" width="15.2" height="1.2" fill="#d0cdd1"/>
<rect x="953" y="251" width="4.4" height="11.6" fill="#d0cdd1"/>
<rect x="959" y="253" width="4.4" height="7.6" fill="#d0cdd1"/>
<rect x="978.6" y="263.4" width="14.6" height="1.2" fill="#d0cdd1"/>
<rect x="981" y="252.4" width="4.4" height="10.2" fill="#d0cdd1"/>
<rect x="987" y="256.4" width="4.4" height="6.2" fill="#d0cdd1"/>
<rect x="826.4" y="295" width="12.8" height="1.1" fill="#d0cdd1"/>
<rect x="829" y="296.8" width="7.6" height="3.2" fill="#d0cdd1"/>
<rect x="826.4" y="303" width="12.8" height="1.1" fill="#d0cdd1"/>
<rect x="827.6" y="304.8" width="10.4" height="3.4" fill="#d0cdd1"/>
<rect x="854.6" y="298" width="12.8" height="1.1" fill="#d0cdd1"/>
<rect x="857.4" y="296.2" width="7.4" height="4.4" fill="#d0cdd1"/>
<rect x="854.6" y="305" width="12.8" height="1.1" fill="#d0cdd1"/>
<rect x="856" y="303" width="10.2" height="4.6" fill="#d0cdd1"/>
<rect x="884" y="300" width="12.8" height="1.1" fill="#d0cdd1"/>
<rect x="886.8" y="296.4" width="7.4" height="3.4" fill="#d0cdd1"/>
<rect x="884" y="307.4" width="12.8" height="1.1" fill="#d0cdd1"/>
<rect x="885.2" y="303.6" width="10.4" height="3.6" fill="#d0cdd1"/>
<rect x="923.6" y="295" width="1.1" height="13.6" fill="#d0cdd1"/>
<rect x="925.4" y="297" width="3.4" height="9.6" fill="#d0cdd1"/>
<rect x="930.8" y="295" width="1.1" height="13.6" fill="#d0cdd1"/>
<rect x="932.6" y="298.6" width="3.4" height="6.6" fill="#d0cdd1"/>
<rect x="954.2" y="295" width="1.1" height="13.6" fill="#d0cdd1"/>
<rect x="952.4" y="297.4" width="4.6" height="8.8" fill="#d0cdd1"/>
<rect x="961.4" y="295" width="1.1" height="13.6" fill="#d0cdd1"/>
<rect x="959.6" y="298.6" width="4.6" height="6.6" fill="#d0cdd1"/>
<rect x="983.6" y="295" width="1.1" height="13.6" fill="#d0cdd1"/>
<rect x="979.6" y="297.4" width="3.4" height="8.8" fill="#d0cdd1"/>
<rect x="990.8" y="295" width="1.1" height="13.6" fill="#d0cdd1"/>
<rect x="986.4" y="298.6" width="3.8" height="6.6" fill="#d0cdd1"/>
<text x="826.20" y="332.50" font-family="'Liberation Sans','Noto Sans CJK SC',sans-serif" font-size="9.6" font-weight="bold" fill="#f0edf1">色板</text>
<text x="858.00" y="332.50" font-family="'Liberation Sans','Noto Sans CJK SC',sans-serif" font-size="9.6" fill="#a8a5a9">符号</text>
<text x="890.60" y="332.50" font-family="'Liberation Sans','Noto Sans CJK SC',sans-serif" font-size="9.6" fill="#a8a5a9">描边</text>
<text x="923.00" y="332.50" font-family="'Liberation Sans','Noto Sans CJK SC',sans-serif" font-size="9.6" fill="#a8a5a9">图形样式</text>
<rect x="986.6" y="327.4" width="8.2" height="0.9" fill="#949195"/>
<rect x="986.6" y="328.9" width="8.2" height="0.9" fill="#949195"/>
<rect x="986.6" y="330.4" width="8.2" height="0.9" fill="#949195"/>
<rect x="986.6" y="331.9" width="8.2" height="0.9" fill="#949195"/>
<rect x="832" y="352.4" width="14.2" height="13.8" fill="#ffffff" stroke="#d0cdd1" stroke-width="0.6"/>
<rect x="836" y="356.4" width="6.2" height="5.8" fill="#555155"/>
<path d="M832.4 365.8 L845.8 352.8" fill="none" stroke="#c8202c" stroke-width="1.6" />
<rect x="824" y="344" width="15" height="14.8" fill="#c9b9a2"/>
<rect x="825.2" y="345.2" width="12.6" height="12.4" fill="#95632f"/>
<rect x="962.2" y="347.6" width="10.4" height="1.7" fill="#d6d3d7"/>
<rect x="962.2" y="351.90000000000003" width="10.4" height="1.7" fill="#d6d3d7"/>
<rect x="962.2" y="356.20000000000005" width="10.4" height="1.7" fill="#d6d3d7"/>
<rect x="977.6" y="344.8" width="17.2" height="16" fill="#302d31"/>
<rect x="980.6" y="347.0" width="3.3" height="3.3" fill="#e4e1e5"/>
<rect x="984.8000000000001" y="347.0" width="3.3" height="3.3" fill="#e4e1e5"/>
<rect x="989.0" y="347.0" width="3.3" height="3.3" fill="#e4e1e5"/>
<rect x="980.6" y="351.2" width="3.3" height="3.3" fill="#e4e1e5"/>
<rect x="984.8000000000001" y="351.2" width="3.3" height="3.3" fill="#e4e1e5"/>
<rect x="989.0" y="351.2" width="3.3" height="3.3" fill="#e4e1e5"/>
<rect x="980.6" y="355.4" width="3.3" height="3.3" fill="#e4e1e5"/>
<rect x="984.8000000000001" y="355.4" width="3.3" height="3.3" fill="#e4e1e5"/>
<rect x="989.0" y="355.4" width="3.3" height="3.3" fill="#e4e1e5"/>
<rect x="824.0" y="371.5" width="10" height="10.2" fill="#ffffff"/>
<path d="M824.3 381.4 L833.7 371.8" fill="none" stroke="#d8202c" stroke-width="1.3" />
<rect x="834.95" y="371.5" width="10" height="10.2" fill="#ffffff"/>
<circle cx="839.95" cy="376.6" r="2.6" fill="none" stroke="#555" stroke-width="0.8"/>
<path d="M839.95 372.3 V380.9 M835.75 376.6 H844.1500000000001" fill="none" stroke="#555" stroke-width="0.8" />
<rect x="835.95" y="372.5" width="1.6" height="1.6" fill="#8aa"/>
<rect x="842.35" y="372.5" width="1.6" height="1.6" fill="#8aa"/>
<rect x="835.95" y="379.1" width="1.6" height="1.6" fill="#8aa"/>
<rect x="842.35" y="379.1" width="1.6" height="1.6" fill="#8aa"/>
<rect x="845.9" y="371.5" width="10" height="10.2" fill="#ffffff"/>
<rect x="856.85" y="371.5" width="10" height="10.2" fill="#000000"/>
<rect x="867.8" y="371.5" width="10" height="10.2" fill="#f01818"/>
<rect x="878.75" y="371.5" width="10" height="10.2" fill="#fff614"/>
<rect x="889.7" y="371.5" width="10" height="10.2" fill="#14ec14"/>
<rect x="900.65" y="371.5" width="10" height="10.2" fill="#14ecec"/>
<rect x="911.6" y="371.5" width="10" height="10.2" fill="#1414ec"/>
<rect x="922.55" y="371.5" width="10" height="10.2" fill="#f014f0"/>
<rect x="933.5" y="371.5" width="10" height="10.2" fill="#cc272d"/>
<rect x="944.45" y="371.5" width="10" height="10.2" fill="#ed1c24"/>
<rect x="955.4" y="371.5" width="10" height="10.2" fill="#f15a24"/>
<rect x="966.35" y="371.5" width="10" height="10.2" fill="#f7931e"/>
<rect x="824.0" y="382.9" width="10" height="10.2" fill="#fbb03b"/>
<rect x="834.95" y="382.9" width="10" height="10.2" fill="#fce822"/>
<rect x="845.9" y="382.9" width="10" height="10.2" fill="#d6de24"/>
<rect x="856.85" y="382.9" width="10" height="10.2" fill="#8cc63f"/>
<rect x="867.8" y="382.9" width="10" height="10.2" fill="#3ab54a"/>
<rect x="878.75" y="382.9" width="10" height="10.2" fill="#0c9246"/>
<rect x="889.7" y="382.9" width="10" height="10.2" fill="#0a6e3c"/>
<rect x="900.65" y="382.9" width="10" height="10.2" fill="#24b574"/>
<rect x="911.6" y="382.9" width="10" height="10.2" fill="#08a99d"/>
<rect x="922.55" y="382.9" width="10" height="10.2" fill="#2cabe2"/>
<rect x="933.5" y="382.9" width="10" height="10.2" fill="#0c72bc"/>
<rect x="944.45" y="382.9" width="10" height="10.2" fill="#2e3292"/>
<rect x="955.4" y="382.9" width="10" height="10.2" fill="#1e1866"/>
<rect x="966.35" y="382.9" width="10" height="10.2" fill="#662d91"/>
<rect x="824.0" y="393.9" width="10" height="10.2" fill="#93278f"/>
<rect x="834.95" y="393.9" width="10" height="10.2" fill="#9e0a5e"/>
<rect x="845.9" y="393.9" width="10" height="10.2" fill="#d4165c"/>
<rect x="856.85" y="393.9" width="10" height="10.2" fill="#ea1e7a"/>
<rect x="867.8" y="393.9" width="10" height="10.2" fill="#c7b299"/>
<rect x="878.75" y="393.9" width="10" height="10.2" fill="#998675"/>
<rect x="889.7" y="393.9" width="10" height="10.2" fill="#736357"/>
<rect x="900.65" y="393.9" width="10" height="10.2" fill="#5a4a44"/>
<rect x="911.6" y="393.9" width="10" height="10.2" fill="#c69c6d"/>
<rect x="922.55" y="393.9" width="10" height="10.2" fill="#a67c52"/>
<rect x="933.5" y="393.9" width="10" height="10.2" fill="#8c6239"/>
<rect x="944.45" y="393.9" width="10" height="10.2" fill="#754c24"/>
<rect x="955.4" y="393.9" width="10" height="10.2" fill="#603813"/>
<rect x="966.35" y="393.9" width="10" height="10.2" fill="#42210b"/>
<rect x="934.1" y="394.5" width="8.8" height="9" fill="none" stroke="#ece6dc" stroke-width="1"/>
<defs><linearGradient id="s1" x1="0" x2="1"><stop offset="0" stop-color="#fff"/><stop offset="1" stop-color="#000"/></linearGradient><linearGradient id="s2" x1="0" x2="1"><stop offset="0" stop-color="#f7931e"/><stop offset="0.6" stop-color="#fbd400"/><stop offset="1" stop-color="#fff6c0"/></linearGradient><linearGradient id="s3" x1="0" x2="1"><stop offset="0" stop-color="#38c0d8"/><stop offset="0.6" stop-color="#bdeef4"/><stop offset="1" stop-color="#ffffff"/></linearGradient></defs>
<rect x="824.0" y="404.9" width="10" height="10" fill="url(#s1)"/>
<rect x="834.95" y="404.9" width="10" height="10" fill="url(#s2)"/>
<rect x="845.9" y="404.9" width="10" height="10" fill="url(#s3)"/>
<rect x="856.85" y="404.9" width="10" height="10" fill="#3c8cc8"/>
<path d="M857.85 407.9 C859.85 405.9 861.85 409.9 865.85 406.9 M857.85 411.9 C859.85 409.9 862.85 413.9 865.85 410.9" fill="none" stroke="#d8ecf8" stroke-width="1.4" />
<rect x="824.4" y="419.5" width="9.2" height="6.8" fill="#cfccd0"/>
<rect x="824.4" y="417.9" width="4" height="2" fill="#cfccd0"/>
<rect x="834.95" y="416.9" width="10" height="10.2" fill="#5cc6d0"/>
<rect x="845.9" y="416.9" width="10" height="10.2" fill="#7c8ad2"/>
<rect x="856.85" y="416.9" width="10" height="10.2" fill="#b88fd8"/>
<rect x="824.4" y="432.0" width="9.2" height="6.8" fill="#cfccd0"/>
<rect x="824.4" y="430.4" width="4" height="2" fill="#cfccd0"/>
<rect x="834.95" y="429.4" width="10" height="10.2" fill="#000000"/>
<rect x="845.9" y="429.4" width="10" height="10.2" fill="#1a1a1a"/>
<rect x="856.85" y="429.4" width="10" height="10.2" fill="#333333"/>
<rect x="867.8" y="429.4" width="10" height="10.2" fill="#4d4d4d"/>
<rect x="878.75" y="429.4" width="10" height="10.2" fill="#666666"/>
<rect x="889.7" y="429.4" width="10" height="10.2" fill="#808080"/>
<rect x="900.65" y="429.4" width="10" height="10.2" fill="#999999"/>
<rect x="911.6" y="429.4" width="10" height="10.2" fill="#b3b3b3"/>
<rect x="922.55" y="429.4" width="10" height="10.2" fill="#cccccc"/>
<rect x="933.5" y="429.4" width="10" height="10.2" fill="#e6e6e6"/>
<rect x="944.45" y="429.4" width="10" height="10.2" fill="#f6f6f6"/>
<path d="M949.8 499.2 H958.2 V507.4 H954 V503.4 H949.8 Z" fill="#cfccd0" />
<path d="M950.4 504.6 H952.8 V507 H950.4 Z" fill="#8f8c90" />
<rect x="970.6" y="501" width="6.4" height="7.2" fill="none" stroke="#c5c2c6" stroke-width="1.3"/>
<rect x="969.2" y="499.6" width="9.2" height="1.4" fill="#c5c2c6"/>
<rect x="972.2" y="498.4" width="3.2" height="1.3" fill="#c5c2c6"/>
<path d="M972.6 502.6 V506.6 M975 502.6 V506.6" fill="none" stroke="#c5c2c6" stroke-width="0.9" />
<text x="826.70" y="527.60" font-family="'Liberation Sans','Noto Sans CJK SC',sans-serif" font-size="9.4" fill="#a8a5a9">段落</text>
<text x="860.4" y="527.4" font-size="10.3" fill="#f0edf1" textLength="47" lengthAdjust="spacingAndGlyphs">OpenType</text>
<rect x="986.7" y="521.6" width="8" height="0.9" fill="#949195"/>
<rect x="986.7" y="523.1" width="8" height="0.9" fill="#949195"/>
<rect x="986.7" y="524.6" width="8" height="0.9" fill="#949195"/>
<rect x="986.7" y="526.1" width="8" height="0.9" fill="#949195"/>
<text x="63.4" y="534.2" font-size="9.4" fill="#e8e5e9" textLength="18.6" lengthAdjust="spacingAndGlyphs">200%</text>
<path d="M104.75 529.8000000000001 L107.5 532.6 L110.25 529.8000000000001" fill="none" stroke="#e4e1e5" stroke-width="1.4" stroke-linecap="round" stroke-linejoin="round"/>
<path d="M122.4 527.6 V534" fill="none" stroke="#78757a" stroke-width="1.2" />
<path d="M127.2 527.6 L123.6 530.8 L127.2 534 Z" fill="#78757a" />
<path d="M140.4 527.6 L136.6 530.8 L140.4 534 Z" fill="#78757a" />
<text x="150.4" y="534.2" font-size="9.4" fill="#e8e5e9">1</text>
<path d="M182.85 529.8000000000001 L185.6 532.6 L188.35 529.8000000000001" fill="none" stroke="#e4e1e5" stroke-width="1.4" stroke-linecap="round" stroke-linejoin="round"/>
<path d="M200.8 527.6 L204.4 530.8 L200.8 534 Z" fill="#78757a" />
<path d="M213.4 527.6 L217 530.8 L213.4 534 Z" fill="#78757a" />
<path d="M218.6 527.6 V534" fill="none" stroke="#78757a" stroke-width="1.2" />
<text x="295.00" y="534.40" font-family="'Liberation Sans','Noto Sans CJK SC',sans-serif" font-size="8.8" fill="#dedbdf">选择</text>
<path d="M387.6 527.4 L391.8 530.8 L387.6 534.2 Z" fill="#e8e5e9" />
<path d="M402.90000000000003 527.9 L400.3 530.4 L402.90000000000003 532.9" fill="none" stroke="#b5b2b6" stroke-width="1.2" stroke-linecap="round" stroke-linejoin="round"/>
<path d="M765.3000000000001 527.9 L767.9 530.4 L765.3000000000001 532.9" fill="none" stroke="#b5b2b6" stroke-width="1.2" stroke-linecap="round" stroke-linejoin="round"/>
<rect x="574" y="525.8" width="20.4" height="8.6" fill="#656166" rx="4.3"/>
<rect x="654" y="516" width="64.4" height="18.4" fill="#ffffff" stroke="#4a78b0" stroke-width="1"/>
<text x="659.20" y="529.60" font-family="'Liberation Sans','Noto Sans CJK SC',sans-serif" font-size="10" fill="#4a7ab0">中</text>
<path d="M680.4 520.2 A5.2 5.2 0 1 1 673.8 527.6 A5.4 5.4 0 0 0 680.4 520.2 Z" fill="#1a6fd8" />
<circle cx="691.4" cy="524" r="1" fill="none" stroke="#2a68a8" stroke-width="0.8"/>
<path d="M695.4 526.6 C695.8 527.6 695.4 528.6 694.4 529.4" fill="none" stroke="#2a68a8" stroke-width="1.1" />
<circle cx="707" cy="525.4" r="3" fill="none" stroke="#1e5a9a" stroke-width="1.5"/>
<line x1="710.40" y1="525.40" x2="712.00" y2="525.40" stroke="#1e5a9a" stroke-width="1.5"/>
<line x1="709.40" y1="527.80" x2="710.54" y2="528.94" stroke="#1e5a9a" stroke-width="1.5"/>
<line x1="707.00" y1="528.80" x2="707.00" y2="530.40" stroke="#1e5a9a" stroke-width="1.5"/>
<line x1="704.60" y1="527.80" x2="703.46" y2="528.94" stroke="#1e5a9a" stroke-width="1.5"/>
<line x1="703.60" y1="525.40" x2="702.00" y2="525.40" stroke="#1e5a9a" stroke-width="1.5"/>
<line x1="704.60" y1="523.00" x2="703.46" y2="521.86" stroke="#1e5a9a" stroke-width="1.5"/>
<line x1="707.00" y1="522.00" x2="707.00" y2="520.40" stroke="#1e5a9a" stroke-width="1.5"/>
<line x1="709.40" y1="523.00" x2="710.54" y2="521.86" stroke="#1e5a9a" stroke-width="1.5"/>
<polygon points="735.9,393.9 910.0,413.2 908.6,414.9 919.2,412.0 909.5,407.0 910.5,409.0 736.1,392.9" fill="#f0363a"/>
<defs><radialGradient id="gb" cx="0.4" cy="0.35" r="0.7"><stop offset="0" stop-color="#5ad66c"/><stop offset="1" stop-color="#34bc4a"/></radialGradient></defs>
<circle cx="1003.2" cy="449.7" r="15.2" fill="url(#gb)" stroke="#a4e6ae" stroke-width="1.4"/>
<text x="992" y="453.4" font-size="9" font-style="italic" font-weight="bold" fill="#dff5e2">72</text>
<path d="M837.6 446.6 C839.5 437.6 850 436.4 853.8 446.8 Z" fill="#cfccd0" opacity="0.85"/>
<path d="M858.6 446 C860.6 438 868 437 871.6 448 Z" fill="#cfccd0" opacity="0.85"/>
<path d="M820.8 504 H826.6 L828 505.4 V510.6 H825.6 L824.4 514.4 L823 510.6 H820.8 Z" fill="#e4e1e5" />
<path d="M822.2 506.4 H826.4" fill="none" stroke="#8f8c90" stroke-width="0.9" />
<clipPath id="wmc"><rect x="900" y="506.2" width="50" height="7"/></clipPath>
<text x="904.6" y="512.8" font-size="17" font-weight="bold" fill="#ece9ed" opacity="0.9" clip-path="url(#wmc)" textLength="41" lengthAdjust="spacingAndGlyphs">.com</text>
<rect x="797.8" y="516.8" width="5" height="1.3" fill="#e8e5e9"/>
<path d="M816.4 465 C814.8 470 814.8 476 816.4 481.4" fill="none" stroke="#b5b2b6" stroke-width="1" opacity="0.8"/>
</svg>
</div>
</body></html>
